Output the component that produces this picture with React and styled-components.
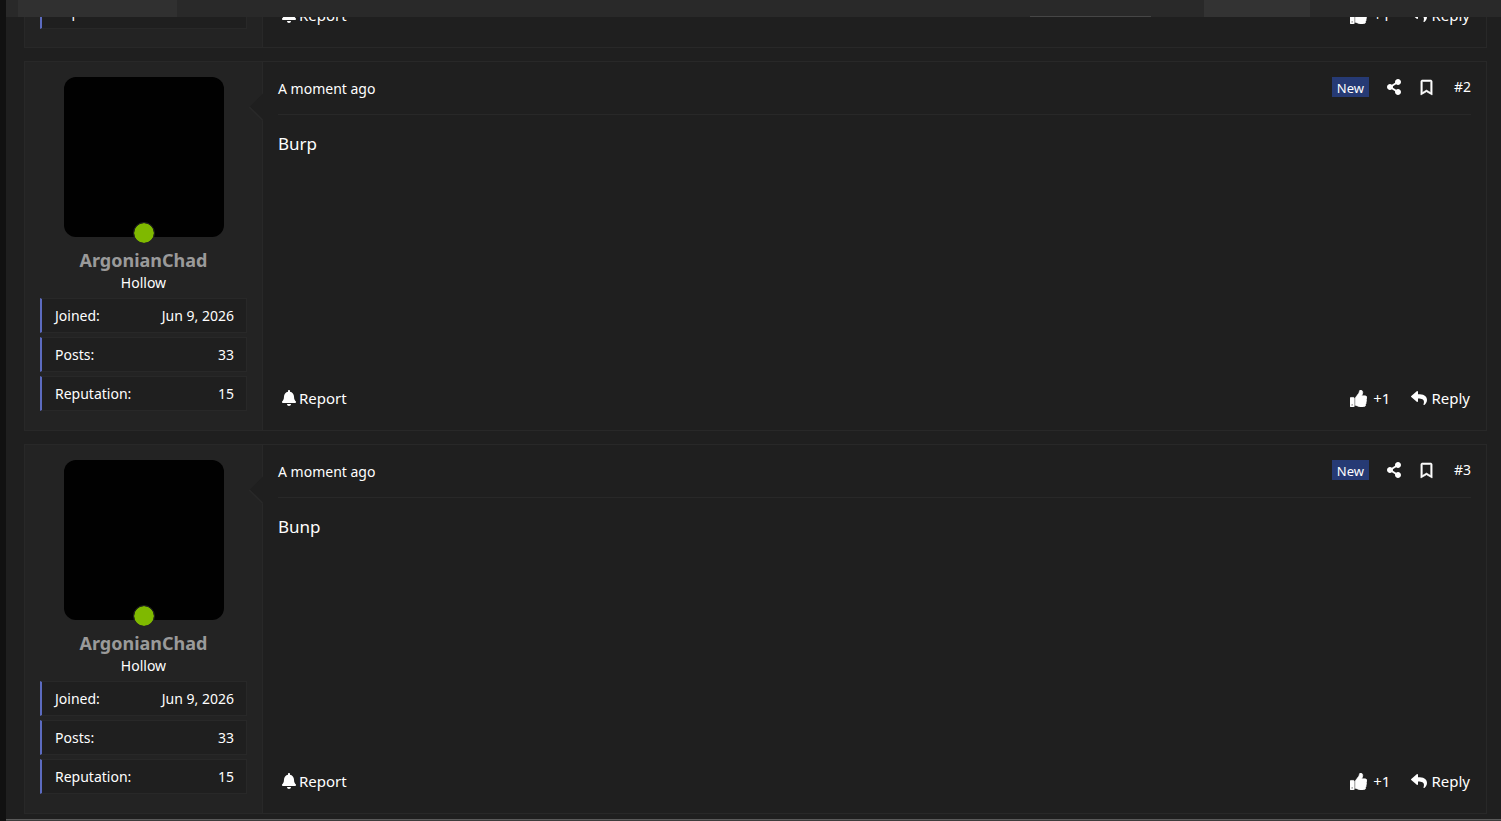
import React from "react";
import styled, { createGlobalStyle } from "styled-components";
import { FaBell, FaThumbsUp, FaReply, FaShareAlt, FaRegBookmark } from "react-icons/fa";

const GlobalStyle = createGlobalStyle`
  *, *::before, *::after { box-sizing: border-box; }
  body {
    margin: 0;
    background: #1f1f1f;
    color: #fefefe;
    font-family: "Segoe UI", "Noto Sans", "Open Sans", sans-serif;
    font-size: 14px;
    line-height: 20px;
  }
  a { color: inherit; text-decoration: none; }
  button { font: inherit; color: inherit; background: none; border: 0; padding: 0; cursor: pointer; }
  h3, p, dl, dd { margin: 0; }
`;

const Page = styled.div`
  display: flex;
  flex-direction: column;
  height: 100vh;
  overflow: hidden;
  border-left: 6px solid #111;
`;

const TopBar = styled.header`
  flex: none;
  display: flex;
  align-items: flex-end;
  height: 17px;
  padding: 0 191px 0 12px;
  background: #292929;
`;

const BarTab = styled.div`
  width: ${(p) => p.$width}px;
  height: 17px;
  background: ${(p) => (p.$bright ? "#333" : "#303030")};
`;

const BarLine = styled.div`
  width: 121px;
  height: 1px;
  margin: 0 53px 0 auto;
  background: #464646;
`;

const Viewport = styled.main`
  flex: 1;
  min-height: 0;
  display: flex;
  flex-direction: column;
  justify-content: flex-end;
  overflow: hidden;
  padding: 0 14px 5px 18px;
`;

const BottomEdge = styled.div`
  flex: none;
  height: 2px;
  margin-left: -6px;
  background: #3c3c3c;
  border-top: 1px solid #5a5a5a;
`;

const Thread = styled.div`
  flex: none;
  display: flex;
  flex-direction: column;
  gap: 13px;
`;

const PostCard = styled.article`
  display: flex;
  min-height: ${(p) => (p.$tail ? "0" : "370px")};
  border: 1px solid #282828;
`;

const UserPanel = styled.aside`
  flex: none;
  width: 238px;
  padding: ${(p) => (p.$tail ? "0 15px 18px" : "15px")};
  background: #232323;
  border-right: 1px solid #282828;
  text-align: center;
`;

const Avatar = styled.div`
  position: relative;
  width: 160px;
  height: 160px;
  margin: 0 auto 11px;
  border-radius: 12px;
  background: #010101;
`;

const OnlineDot = styled.span`
  position: absolute;
  left: 50%;
  bottom: -7px;
  width: 22px;
  height: 22px;
  margin-left: -11px;
  border: 1px solid #232323;
  border-radius: 50%;
  background: #7fb900;
  background-clip: padding-box;
`;

const UserName = styled.h3`
  font-size: 18px;
  line-height: 24px;
  font-weight: 700;
  color: #9a9a9a;
`;

const UserTitle = styled.p`
  line-height: 22px;
  margin-bottom: 4px;
`;

const Stats = styled.dl`
  display: flex;
  flex-direction: column;
  gap: 4px;
`;

const Stat = styled.div`
  display: flex;
  justify-content: space-between;
  height: 35px;
  padding: 7px 12px 6px 13px;
  background: #1f1f1f;
  border: 1px solid #282828;
  border-left: 2px solid #5c6bc0;
`;

const PostMain = styled.div`
  position: relative;
  flex: 1;
  min-width: 0;
  display: flex;
  flex-direction: column;
  justify-content: flex-end;
  padding: ${(p) => (p.$tail ? "0 15px 15px" : "15px")};
`;

const Pointer = styled.svg`
  position: absolute;
  left: -14px;
  top: 31px;
`;

const PostHeader = styled.header`
  display: flex;
  justify-content: space-between;
  height: 38px;
  border-bottom: 1px solid #282828;
`;

const PostTime = styled.time`
  line-height: 24px;
`;

const HeaderLinks = styled.div`
  display: flex;
  align-items: center;
  height: 20px;
  gap: 17px;

  svg { display: block; }
`;

const NewBadge = styled.span`
  height: 20px;
  padding: 0 5px;
  background: #263a74;
  font-size: 13px;
  line-height: 22px;
`;

const HeaderLink = styled.a`
  display: block;
  line-height: 22px;
`;

const BookmarkLink = styled(HeaderLink)`
  padding-right: 3px;

  svg {
    stroke: currentColor;
    stroke-width: 20px;
    overflow: visible;
  }
`;

const PostBody = styled.p`
  flex: 1;
  padding-top: 17px;
  font-size: 17px;
  line-height: 24px;
`;

const Actions = styled.footer`
  display: flex;
  gap: 21px;
  height: 22px;
  margin-bottom: 6px;
  padding: 0 1px 0 3px;
  font-size: 15px;
`;

const Action = styled.button`
  display: flex;
  align-items: center;
  gap: ${(p) => p.$gap}px;
  margin-right: ${(p) => (p.$first ? "auto" : "0")};
`;

const posts = [
  { id: 2, text: "Burp" },
  { id: 3, text: "Bunp" },
];

const stats = [
  ["Joined:", "Jun 9, 2026"],
  ["Posts:", "33"],
  ["Reputation:", "15"],
];

function StatRow({ label, value }) {
  return (
    <Stat>
      <dt>{label}</dt>
      <dd>{value}</dd>
    </Stat>
  );
}

function PostActions() {
  return (
    <Actions>
      <Action type="button" $first $gap={2}><FaBell size={16} />Report</Action>
      <Action type="button" $gap={6}><FaThumbsUp size={17} stroke="currentColor" strokeWidth="20" />+1</Action>
      <Action type="button" $gap={4}><FaReply size={16} />Reply</Action>
    </Actions>
  );
}

/* End of the post that is scrolled under the top bar */
function PostTail() {
  return (
    <PostCard $tail>
      <UserPanel $tail>
        <Stats>
          <StatRow label="Reputation:" />
        </Stats>
      </UserPanel>
      <PostMain $tail>
        <PostActions />
      </PostMain>
    </PostCard>
  );
}

function Post({ id, text }) {
  return (
    <PostCard>
      <UserPanel>
        <Avatar>
          <OnlineDot />
        </Avatar>
        <UserName><a href="#user">ArgonianChad</a></UserName>
        <UserTitle>Hollow</UserTitle>
        <Stats>
          {stats.map(([label, value]) => (
            <StatRow key={label} label={label} value={value} />
          ))}
        </Stats>
      </UserPanel>
      <PostMain>
        <Pointer width="14" height="28" viewBox="0 0 14 28" aria-hidden="true">
          <path d="M14 0.5 L0.8 14 L14 27.5 Z" fill="#1f1f1f" />
          <path d="M0.3 14 L13.5 27" fill="none" stroke="#292929" strokeWidth="1.5" />
        </Pointer>
        <PostHeader>
          <PostTime>A moment ago</PostTime>
          <HeaderLinks>
            <NewBadge>New</NewBadge>
            <HeaderLink href="#share" aria-label="Share"><FaShareAlt size={16} /></HeaderLink>
            <BookmarkLink href="#bookmark" aria-label="Bookmark"><FaRegBookmark size={15} /></BookmarkLink>
            <HeaderLink href={`#post-${id}`}>#{id}</HeaderLink>
          </HeaderLinks>
        </PostHeader>
        <PostBody>{text}</PostBody>
        <PostActions />
      </PostMain>
    </PostCard>
  );
}

export default function App() {
  return (
    <>
      <GlobalStyle />
      <Page>
        <TopBar>
          <BarTab $width={159} />
          <BarLine />
          <BarTab $width={106} $bright />
        </TopBar>
        <Viewport>
          <Thread>
            <PostTail />
            {posts.map((p) => <Post key={p.id} {...p} />)}
          </Thread>
        </Viewport>
        <BottomEdge />
      </Page>
    </>
  );
}
